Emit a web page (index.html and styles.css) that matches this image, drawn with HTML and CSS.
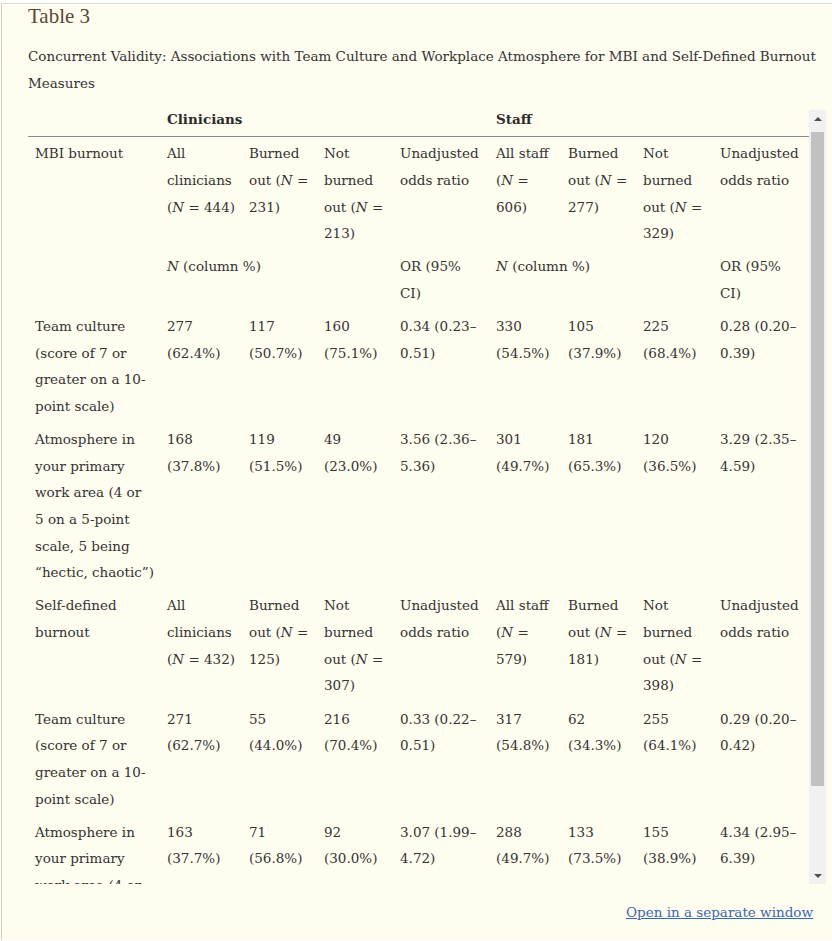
FILE: index.html
```html
<!DOCTYPE html>
<html lang="en">
<head>
<meta charset="utf-8">
<title>Table 3</title>
<link rel="stylesheet" href="styles.css">
</head>
<body>
<div class="panel">
  <h2 class="title">Table 3</h2>
  <p class="caption">Concurrent Validity: Associations with Team Culture and Workplace Atmosphere for MBI and Self-Defined Burnout Measures</p>
  <div class="tablebox">
    <div class="scroller">
      <table class="data">
        <colgroup>
          <col class="c1"><col class="c2"><col class="c3"><col class="c4"><col class="c5">
          <col class="c6"><col class="c7"><col class="c8"><col class="c9">
        </colgroup>
        <thead>
          <tr>
            <th></th>
            <th colspan="4">Clinicians</th>
            <th colspan="4">Staff</th>
          </tr>
        </thead>
        <tbody>
          <tr>
            <td>MBI burnout</td>
            <td>All clinicians (<i>N</i> = 444)</td>
            <td>Burned out (<i>N</i> = 231)</td>
            <td>Not burned out (<i>N</i> = 213)</td>
            <td>Unadjusted odds ratio</td>
            <td>All staff (<i>N</i> = 606)</td>
            <td>Burned out (<i>N</i> = 277)</td>
            <td>Not burned out (<i>N</i> = 329)</td>
            <td>Unadjusted odds ratio</td>
          </tr>
          <tr>
            <td></td>
            <td colspan="3"><i>N</i> (column %)</td>
            <td class="or">OR (95% CI)</td>
            <td colspan="3"><i>N</i> (column %)</td>
            <td class="or">OR (95% CI)</td>
          </tr>
          <tr>
            <td>Team culture (score of 7 or greater on a 10-point scale)</td>
            <td>277 (62.4%)</td>
            <td>117 (50.7%)</td>
            <td>160 (75.1%)</td>
            <td>0.34 (0.23–0.51)</td>
            <td>330 (54.5%)</td>
            <td>105 (37.9%)</td>
            <td>225 (68.4%)</td>
            <td>0.28 (0.20–0.39)</td>
          </tr>
          <tr>
            <td>Atmosphere in your primary work area (4 or 5&nbsp;on a 5-point scale, 5 being “hectic, chaotic”)</td>
            <td>168 (37.8%)</td>
            <td>119 (51.5%)</td>
            <td>49 (23.0%)</td>
            <td>3.56 (2.36–5.36)</td>
            <td>301 (49.7%)</td>
            <td>181 (65.3%)</td>
            <td>120 (36.5%)</td>
            <td>3.29 (2.35–4.59)</td>
          </tr>
          <tr>
            <td>Self-defined burnout</td>
            <td>All clinicians (<i>N</i> = 432)</td>
            <td>Burned out (<i>N</i> = 125)</td>
            <td>Not burned out (<i>N</i> = 307)</td>
            <td>Unadjusted odds ratio</td>
            <td>All staff (<i>N</i> = 579)</td>
            <td>Burned out (<i>N</i> = 181)</td>
            <td>Not burned out (<i>N</i> = 398)</td>
            <td>Unadjusted odds ratio</td>
          </tr>
          <tr>
            <td>Team culture (score of 7 or greater on a 10-point scale)</td>
            <td>271 (62.7%)</td>
            <td>55 (44.0%)</td>
            <td>216 (70.4%)</td>
            <td>0.33 (0.22–0.51)</td>
            <td>317 (54.8%)</td>
            <td>62 (34.3%)</td>
            <td>255 (64.1%)</td>
            <td>0.29 (0.20–0.42)</td>
          </tr>
          <tr>
            <td>Atmosphere in your primary work area (4 or 5&nbsp;on a 5-point scale, 5 being “hectic, chaotic”)</td>
            <td>163 (37.7%)</td>
            <td>71 (56.8%)</td>
            <td>92 (30.0%)</td>
            <td>3.07 (1.99–4.72)</td>
            <td>288 (49.7%)</td>
            <td>133 (73.5%)</td>
            <td>155 (38.9%)</td>
            <td>4.34 (2.95–6.39)</td>
          </tr>
        </tbody>
      </table>
    </div>
    <div class="scrollbar">
      <div class="sb-btn"><span class="tri-up"></span></div>
      <div class="sb-track"><div class="sb-thumb"></div></div>
      <div class="sb-btn"><span class="tri-down"></span></div>
    </div>
  </div>
  <div class="linkrow"><a href="#" class="openlink">Open in a separate window</a></div>
</div>
</body>
</html>
```
FILE: styles.css
```css
html, body {
  margin: 0;
  padding: 0;
  background: #ffffff;
}
body {
  font-family: "DejaVu Serif", "Liberation Serif", serif;
  color: #333;
}
.panel {
  margin-top: 3px;
  margin-left: 1px;
  border-top: 1px solid #dcdcdc;
  border-left: 1px solid #e3c8b8;
  background: #fffdf0;
  padding: 0 6px 0 26px;
  height: 937px;
  box-sizing: border-box;
}
.title {
  margin: 0;
  font-family: "Liberation Serif", serif;
  font-size: 21px;
  line-height: 24px;
  font-weight: normal;
  color: #5a4838;
}
.caption {
  margin: 15px 0 0;
  font-size: 13.5px;
  line-height: 27px;
  color: #333;
}
.tablebox {
  display: flex;
  margin-top: 13px;
  height: 774px;
}
.scroller {
  width: 781px;
  height: 774px;
  overflow: hidden;
}
.data {
  width: 781px;
  table-layout: fixed;
  border-collapse: collapse;
  font-size: 13.5px;
  line-height: 26.67px;
}
.c1 { width: 132px; }
.c2 { width: 82px; }
.c3 { width: 75px; }
.c4 { width: 76px; }
.c5 { width: 96px; }
.c6 { width: 72px; }
.c7 { width: 75px; }
.c8 { width: 77px; }
.c9 { width: 96px; }
.data th {
  text-align: left;
  font-weight: bold;
  line-height: 18px;
  padding: 0 4px 8px 7px;
  border-bottom: 1px solid #8a8a8a;
  color: #2b2b2b;
}
.data td {
  vertical-align: top;
  padding: 3.2px 4px 3.2px 7px;
  color: #333;
}
.data td.or {
  padding-right: 10px;
}
.scrollbar {
  width: 17px;
  height: 774px;
  background: #f1f1f1;
  display: flex;
  flex-direction: column;
}
.sb-btn {
  height: 17px;
  display: flex;
  align-items: center;
  justify-content: center;
}
.tri-up {
  width: 0;
  height: 0;
  border-left: 4px solid transparent;
  border-right: 4px solid transparent;
  border-bottom: 4px solid #505050;
}
.tri-down {
  width: 0;
  height: 0;
  border-left: 4px solid transparent;
  border-right: 4px solid transparent;
  border-top: 4px solid #505050;
}
.sb-track {
  flex: 1;
  padding: 5px 2px 0;
}
.sb-thumb {
  height: 654px;
  background: #c1c1c1;
}
.linkrow {
  display: flex;
  justify-content: flex-end;
  padding-right: 13px;
  margin-top: 18px;
}
.openlink {
  font-size: 13.5px;
  line-height: 20px;
  color: #3a67ad;
  text-decoration: underline;
}
```
